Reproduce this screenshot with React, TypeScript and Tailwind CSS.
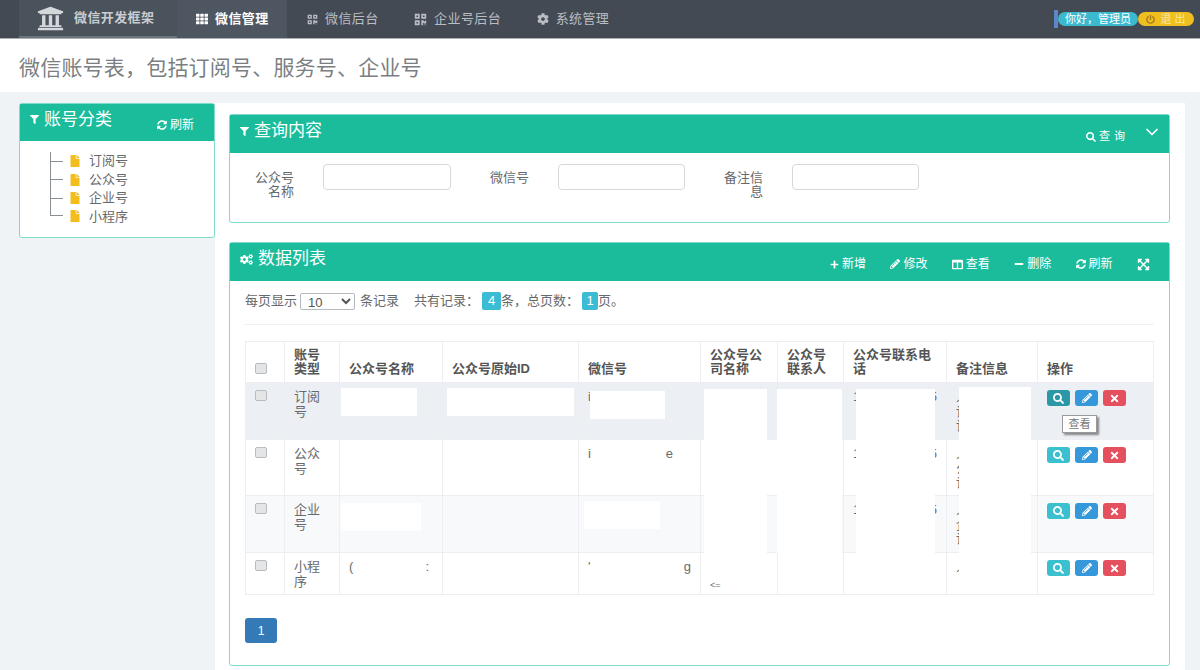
import {
  FaUniversity,
  FaTh,
  FaQrcode,
  FaCog,
  FaPowerOff,
  FaFilter,
  FaSyncAlt,
  FaSearch,
  FaFile,
  FaCogs,
  FaPlus,
  FaPencilAlt,
  FaColumns,
  FaMinus,
  FaExpandArrowsAlt,
  FaTimes,
} from 'react-icons/fa';
import { FiChevronDown } from 'react-icons/fi';

const font = { fontFamily: '"Liberation Sans", "Noto Sans CJK SC", sans-serif' };

const rows = [
  { type: '订阅号', wx: ['i', ''], phone: ['1', '5'], note: ['人', '设', '设'], rowClass: 'h-[57px] bg-[#eceff4]', first: true },
  { type: '公众号', wx: ['i', 'e'], wxPad: 'pr-[18px]', phone: ['1', '5'], note: ['人', '公', '设'], rowClass: 'h-[56px]' },
  { type: '企业号', wx: ['', ''], phone: ['1', '5'], note: ['人', '企', '设'], rowClass: 'h-[57px] bg-[#f8f9fb]' },
  { type: '小程序', name: ['(', ':'], wx: ["'", 'g'], phone: ['', ''], note: ['人'], company: '<=', rowClass: 'h-[42px]' },
];

function NavItem({ icon, label, active }: { icon: React.ReactNode; label: string; active?: boolean }) {
  return (
    <div className={`flex items-center gap-[7px] h-full text-[13px] tracking-[0.4px] ${active ? 'bg-[#4e5761] text-white font-bold w-[110px] pl-[19px]' : 'text-[#b9bec4]'}`}>
      {icon}
      <span>{label}</span>
    </div>
  );
}

function ToolItem({ icon, label }: { icon: React.ReactNode; label?: string }) {
  return (
    <div className="flex items-center gap-[3px] text-[12px] text-white">
      {icon}
      {label && <span>{label}</span>}
    </div>
  );
}

function TreeItem({ label, last }: { label: string; last?: boolean }) {
  return (
    <div className="relative flex items-center h-[18.4px] pl-[19px]">
      <span className={`absolute left-0 top-0 w-[13px] border-l border-[#8a8f94] ${last ? 'h-[9px] border-b rounded-bl-[1px]' : 'h-full'}`} />
      {!last && <span className="absolute left-0 top-[9px] w-[13px] border-t border-[#8a8f94]" />}
      <FaFile className="text-[#f2bd1d] text-[12px]" />
      <span className="ml-[8px] text-[13px] text-[#676a6c]">{label}</span>
    </div>
  );
}

function ActionButtons({ first }: { first?: boolean }) {
  return (
    <div className="flex gap-[5px]">
      <span className={`flex items-center justify-center w-[23px] h-[16px] rounded-[3px] text-white text-[11px] ${first ? 'bg-[#2b98a5]' : 'bg-[#3bc0cf]'}`}>
        <FaSearch />
      </span>
      <span className="flex items-center justify-center w-[23px] h-[16px] rounded-[3px] bg-[#3498db] text-white text-[10px]">
        <FaPencilAlt />
      </span>
      <span className="flex items-center justify-center w-[23px] h-[16px] rounded-[3px] bg-[#e5505f] text-white text-[11px]">
        <FaTimes />
      </span>
    </div>
  );
}

function Stub({ parts, className }: { parts?: string[]; className?: string }) {
  if (!parts) return null;
  return (
    <div className={`flex justify-between ${className ?? ''}`}>
      <span>{parts[0]}</span>
      <span>{parts[1]}</span>
    </div>
  );
}

const thClass = 'border border-[#eceef1] px-[9px] pt-[5px] pb-[6px] align-bottom text-left font-bold text-[13px] leading-[14px] text-[#555]';
const tdClass = 'border border-[#eceef1] px-[9px] pt-[7px] align-top text-[13px] leading-[14.5px] text-[#676a6c]';

export default function App() {
  return (
    <div className="w-[1200px] h-[670px] overflow-hidden bg-[#eff3f6] flex flex-col" style={font}>
      {/* top bar */}
      <div className="h-[39px] shrink-0 bg-[#434a54] border-b border-[#aab0b6] flex items-center">
        <div className="ml-[19px] w-[158px] h-full flex items-center gap-[10px] pl-[18px] border-b-2 border-[#6b737c] bg-[#4a525c]">
          <FaUniversity className="text-[#d5d8db] text-[27px]" />
          <span className="text-[13px] tracking-[0.4px] font-bold text-[#c9cdd1]">微信开发框架</span>
        </div>
        <NavItem active icon={<FaTh className="text-[12px]" />} label="微信管理" />
        <div className="flex items-center h-full gap-[35.5px] ml-[20px]">
          <NavItem icon={<FaQrcode className="text-[11px]" />} label="微信后台" />
          <NavItem icon={<FaQrcode className="text-[13px]" />} label="企业号后台" />
          <NavItem icon={<FaCog className="text-[12px]" />} label="系统管理" />
        </div>
        <div className="ml-auto mr-[6px] flex items-center">
          <span className="w-[4px] h-[18px] bg-[#5b86c9]" />
          <span className="flex items-center justify-center w-[80px] h-[14px] rounded-full bg-[#3bb9cf] text-white text-[11px]">你好，管理员</span>
          <span className="flex items-center justify-center gap-[5px] w-[56px] h-[14px] rounded-full bg-[#eebf1e] text-[#f6e7a3] text-[11px]">
            <FaPowerOff className="text-[#a9791a] text-[9px]" />
            退 出
          </span>
        </div>
      </div>

      {/* page title */}
      <div className="h-[53px] shrink-0 bg-white flex items-center pl-[19px] pt-[5px] text-[21px] tracking-[0.2px] text-[#7b7f83]">
        微信账号表，包括订阅号、服务号、企业号
      </div>

      <div className="flex flex-1 mt-[11px] pl-[19px]">
        {/* left tree */}
        <aside className="w-[196px] shrink-0">
          <div className="h-[135px] bg-white border border-[#7fdccc] rounded-[3px]">
            <div className="h-[37px] bg-[#1abc9c] text-white flex items-center justify-between pl-[10px] pr-[20px]">
              <div className="flex items-center gap-[5px] text-[17px] -mt-[6px]">
                <FaFilter className="text-[9px]" />
                账号分类
              </div>
              <div className="mt-[5px]">
                <ToolItem icon={<FaSyncAlt className="text-[10px]" />} label="刷新" />
              </div>
            </div>
            <div className="pl-[30px] pt-[11px]">
              <TreeItem label="订阅号" />
              <TreeItem label="公众号" />
              <TreeItem label="企业号" />
              <TreeItem label="小程序" last />
            </div>
          </div>
        </aside>

        {/* content */}
        <main className="w-[970px] bg-white px-[14px] pt-[11px]">
          <div className="h-[109px] w-[941px] border border-[#7fdccc] rounded-[3px]">
            <div className="h-[38px] bg-[#1abc9c] text-white flex items-center justify-between pl-[10px] pr-[7px]">
              <div className="flex items-center gap-[5px] text-[17px] -mt-[6px]">
                <FaFilter className="text-[9px]" />
                查询内容
              </div>
              <div className="flex items-center gap-[13px]">
                <div className="flex items-center gap-[3px] text-[11px] mt-[5px]">
                  <FaSearch className="text-[10px]" />
                  <span className="tracking-[4px]">查询</span>
                </div>
                <FiChevronDown className="text-[20px] -mt-[5px]" />
              </div>
            </div>
            <div className="flex pl-[24px] pt-[11px] text-[13px] leading-[14px] text-[#676a6c]">
              <div className="w-[40px] text-right pt-[7px]">公众号名称</div>
              <div className="ml-[29px] w-[128px] h-[26px] border border-[#d5d9dc] rounded-[4px]" />
              <div className="ml-[38px] w-[40px] text-right pt-[7px]">微信号</div>
              <div className="ml-[29px] w-[127px] h-[26px] border border-[#d5d9dc] rounded-[4px]" />
              <div className="ml-[38px] w-[40px] text-right pt-[7px]">备注信息</div>
              <div className="ml-[29px] w-[127px] h-[26px] border border-[#d5d9dc] rounded-[4px]" />
            </div>
          </div>

          <div className="mt-[19px] h-[424px] w-[941px] border border-[#7fdccc] rounded-[3px]">
            <div className="h-[38px] bg-[#1abc9c] text-white flex items-center justify-between pl-[10px] pr-[19px]">
              <div className="flex items-center gap-[5px] text-[17px] -mt-[6px]">
                <FaCogs className="text-[13px]" />
                数据列表
              </div>
              <div className="flex items-center gap-[24.4px] mt-[4px]">
                <ToolItem icon={<FaPlus className="text-[9px]" />} label="新增" />
                <ToolItem icon={<FaPencilAlt className="text-[10px]" />} label="修改" />
                <ToolItem icon={<FaColumns className="text-[11px]" />} label="查看" />
                <ToolItem icon={<FaMinus className="text-[10px]" />} label="删除" />
                <ToolItem icon={<FaSyncAlt className="text-[10px]" />} label="刷新" />
                <ToolItem icon={<FaExpandArrowsAlt className="text-[13px]" />} />
              </div>
            </div>

            <div className="px-[15px]">
              <div className="h-[44px] flex items-center border-b border-[#eef0f2] text-[13px] text-[#676a6c] pb-[3px]">
                <span>每页显示</span>
                <select className="ml-[3px] w-[55px] h-[17px] border border-[#b5b9bd] rounded-[2px] bg-white text-[13px] pl-[3px] text-[#555]" defaultValue="10">
                  <option>10</option>
                </select>
                <span className="ml-[5px]">条记录</span>
                <span className="ml-[15px]">共有记录：</span>
                <span className="w-[19px] h-[18px] ml-[3px] rounded-[2px] bg-[#3bbcd4] text-white flex items-center justify-center">4</span>
                <span>条，总页数：</span>
                <span className="w-[16px] h-[18px] ml-[3px] rounded-[2px] bg-[#3bbcd4] text-white flex items-center justify-center">1</span>
                <span>页。</span>
              </div>

              <div className="relative mt-[16px] w-[908px]">
                <table className="w-[908px] table-fixed border-collapse">
                  <colgroup>
                    <col className="w-[39px]" />
                    <col className="w-[55px]" />
                    <col className="w-[103px]" />
                    <col className="w-[136px]" />
                    <col className="w-[122px]" />
                    <col className="w-[77px]" />
                    <col className="w-[66px]" />
                    <col className="w-[103px]" />
                    <col className="w-[91px]" />
                    <col className="w-[116px]" />
                  </colgroup>
                  <thead>
                    <tr className="h-[41px]">
                      <th className={thClass}>
                        <span className="block w-[12px] h-[11px] rounded-[2px] border border-[#b9bcbf] bg-[#e4e5e6] mb-[2px]" />
                      </th>
                      <th className={thClass}>账号类型</th>
                      <th className={thClass}>公众号名称</th>
                      <th className={thClass}>公众号原始ID</th>
                      <th className={thClass}>微信号</th>
                      <th className={thClass}>公众号公司名称</th>
                      <th className={thClass}>公众号联系人</th>
                      <th className={thClass}>公众号联系电话</th>
                      <th className={thClass}>备注信息</th>
                      <th className={thClass}>操作</th>
                    </tr>
                  </thead>
                  <tbody>
                    {rows.map((r) => (
                      <tr key={r.type} className={r.rowClass}>
                        <td className={tdClass}>
                          <span className="block w-[12px] h-[11px] rounded-[2px] border border-[#b9bcbf] bg-[#e4e5e6]" />
                        </td>
                        <td className={tdClass}>{r.type}</td>
                        <td className={tdClass}><Stub parts={r.name} className="pr-[4px]" /></td>
                        <td className={tdClass} />
                        <td className={tdClass}><Stub parts={r.wx} className={r.wxPad} /></td>
                        <td className={`${tdClass} !align-bottom !pb-[2px]`}><span className="text-[9px]">{r.company}</span></td>
                        <td className={tdClass} />
                        <td className={tdClass}><Stub parts={r.phone} /></td>
                        <td className={tdClass}>
                          {r.note.map((n, j) => (
                            <div key={j}>{n}</div>
                          ))}
                        </td>
                        <td className={tdClass}><ActionButtons first={r.first} /></td>
                      </tr>
                    ))}
                  </tbody>
                </table>

                {/* masked values */}
                <div className="absolute bg-white left-[96px] top-[47px] w-[76px] h-[28px]" />
                <div className="absolute bg-white left-[202px] top-[47px] w-[127px] h-[28px]" />
                <div className="absolute bg-white left-[345px] top-[50px] w-[75px] h-[28px]" />
                <div className="absolute bg-white left-[459px] top-[48px] w-[63px] h-[164px]" />
                <div className="absolute bg-white left-[532px] top-[48px] w-[65px] h-[164px]" />
                <div className="absolute bg-white left-[611px] top-[48px] w-[79px] h-[164px]" />
                <div className="absolute bg-white left-[714px] top-[46px] w-[72px] h-[166px]" />
                <div className="absolute bg-white left-[714px] top-[214px] w-[72px] h-[38px]" />
                <div className="absolute bg-white left-[96px] top-[162px] w-[80px] h-[28px]" />
                <div className="absolute bg-white left-[339px] top-[160px] w-[76px] h-[28px]" />

                {/* tooltip */}
                <div className="absolute left-[817px] top-[74px] w-[35px] h-[18px] bg-white border border-[#9a9a9a] shadow-[2px_2px_2px_rgba(0,0,0,0.45)] flex items-center justify-center text-[11px] text-[#777]">
                  查看
                </div>
              </div>

              <div className="mt-[23px] w-[32px] h-[25px] rounded-[3px] bg-[#337ab7] text-white text-[12px] flex items-center justify-center">
                1
              </div>
            </div>
          </div>
        </main>
      </div>
    </div>
  );
}
